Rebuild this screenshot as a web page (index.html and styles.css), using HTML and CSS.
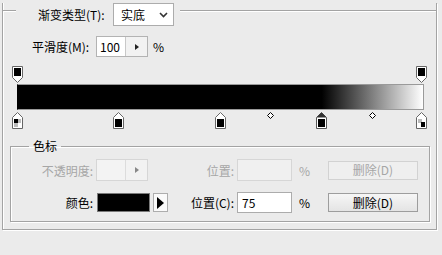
FILE: index.html
```
<!DOCTYPE html>
<html lang="zh-CN">
<head>
    <meta charset="UTF-8">
    <title>渐变编辑器</title>
    <link rel="stylesheet" href="styles.css">
</head>
<body>
    <div class="frame">
        <div class="frameHead">
            <span class="rule ruleShort"></span>
            <label class="headLabel">渐变类型(T):</label>
            <div class="select">
                <span>实底</span>
                <svg class="chevron" width="9" height="6" viewBox="0 0 9 6"><polyline points="1,1 4.5,4.5 8,1" fill="none" stroke="#333" stroke-width="1.6"/></svg>
            </div>
            <span class="rule ruleFill"></span>
        </div>

        <div class="smoothRow">
            <label class="smoothLabel">平滑度(M):</label>
            <div class="spin">
                <span class="spinVal">100</span>
                <span class="spinBtn"><svg width="4" height="6" viewBox="0 0 4 6"><polygon points="0,0 4,3 0,6" fill="#222"/></svg></span>
            </div>
            <span class="unit">%</span>
        </div>

        <!-- gradient ramp: stops sit at their percent position -->
        <div class="ramp">
            <svg class="stop stopTop" style="left:9px" width="11" height="17" viewBox="0 0 11 17"><path d="M0.5,0.5H10.5V11.5L5.5,16.5L0.5,11.5Z" fill="#fff" stroke="#666"/><rect x="2" y="2" width="7" height="8" fill="#000"/></svg>
            <svg class="stop stopTop" style="left:413px" width="11" height="17" viewBox="0 0 11 17"><path d="M0.5,0.5H10.5V11.5L5.5,16.5L0.5,11.5Z" fill="#fff" stroke="#666"/><rect x="2" y="2" width="7" height="8" fill="#000"/></svg>

            <div class="bar"></div>

            <svg class="stop stopBottom" style="left:9px" width="11" height="17" viewBox="0 0 11 17"><path d="M5.5,0.5L10.5,5.5V16.5H0.5V5.5Z" fill="#fff" stroke="#666"/><rect x="2" y="7" width="7" height="8" fill="#bbb"/><rect x="2" y="7" width="4" height="4" fill="#000"/><rect x="6" y="11" width="3" height="4" fill="#fff"/></svg>
            <svg class="stop stopBottom" style="left:110px" width="11" height="17" viewBox="0 0 11 17"><path d="M5.5,0.5L10.5,5.5V16.5H0.5V5.5Z" fill="#fff" stroke="#666"/><rect x="2" y="7" width="7" height="8" fill="#000"/></svg>
            <svg class="stop stopBottom" style="left:212px" width="11" height="17" viewBox="0 0 11 17"><path d="M5.5,0.5L10.5,5.5V16.5H0.5V5.5Z" fill="#fff" stroke="#666"/><rect x="2" y="7" width="7" height="8" fill="#000"/></svg>
            <svg class="stop stopBottom" style="left:313px" width="11" height="17" viewBox="0 0 11 17"><path d="M5.5,0.5L10.5,5.5V16.5H0.5V5.5Z" fill="#fff" stroke="#555"/><path d="M5.5,0.5L10.5,5.5H0.5Z" fill="#333"/><rect x="2" y="7" width="7" height="8" fill="#000"/></svg>
            <svg class="stop stopBottom" style="left:413px" width="11" height="17" viewBox="0 0 11 17"><path d="M5.5,0.5L10.5,5.5V16.5H0.5V5.5Z" fill="#fff" stroke="#666"/><rect x="2" y="7" width="4" height="4" fill="#bbb"/><rect x="5" y="10" width="4" height="5" fill="#000"/></svg>

            <svg class="mid" style="left:264px" width="7" height="7" viewBox="0 0 7 7"><polygon points="3.5,0.5 6.5,3.5 3.5,6.5 0.5,3.5" fill="#fff" stroke="#000"/></svg>
            <svg class="mid" style="left:366px" width="7" height="7" viewBox="0 0 7 7"><polygon points="3.5,0.5 6.5,3.5 3.5,6.5 0.5,3.5" fill="#fff" stroke="#000"/></svg>
        </div>

        <fieldset class="stopGroup">
            <legend>色标</legend>
            <div class="stopGrid">
                <span class="fieldLabel disabled">不透明度:</span>
                <div class="spin spinOff">
                    <span class="spinVal"></span>
                    <span class="spinBtn"><svg width="4" height="6" viewBox="0 0 4 6"><polygon points="0,0 4,3 0,6" fill="#888"/></svg></span>
                </div>
                <span class="fieldLabel disabled">位置:</span>
                <div class="textBox textOff"></div>
                <span class="unit disabled">%</span>
                <button class="btn" disabled>删除(D)</button>

                <span class="fieldLabel">颜色:</span>
                <div class="colorPick">
                    <span class="swatch"></span>
                    <span class="swatchBtn"><svg width="7" height="12" viewBox="0 0 7 12"><polygon points="0,0 7,6 0,12" fill="#000"/></svg></span>
                </div>
                <span class="fieldLabel">位置(C):</span>
                <div class="textBox">75</div>
                <span class="unit">%</span>
                <button class="btn">删除(D)</button>
            </div>
        </fieldset>
    </div>
</body>
</html>
```

FILE: styles.css
```
body {
    margin: 0;
    background-color: #ebebeb;
    font-family: "Noto Sans CJK SC", "Liberation Sans", sans-serif;
    font-size: 12px;
    color: #000;
    height: 255px;
    overflow: hidden;
}

.frame {
    margin: 11px 5px 0 2px;
    border: 1px solid #a3a3a3;
    border-top: none;
    box-shadow: inset 1px 0 0 #fff, 1px 1px 0 #fff;
}

.frameHead {
    display: flex;
    align-items: center;
    height: 23px;
    margin-top: -8px;
}

.rule {
    align-self: flex-start;
    height: 7px;
    border-bottom: 1px solid #a3a3a3;
    box-shadow: 0 1px 0 #fff;
}

.ruleShort {
    width: 13px;
}

.ruleFill {
    flex: 1;
    margin-left: 6px;
}

.headLabel {
    width: 75px;
    margin-left: 22px;
    line-height: 16px;
}

.select {
    width: 61px;
    height: 23px;
    box-sizing: border-box;
    border: 1px solid #acacac;
    background-color: #fff;
    display: flex;
    align-items: center;
    justify-content: space-between;
    padding: 0 5px 0 7px;
    line-height: 16px;
}

.smoothRow {
    display: flex;
    align-items: center;
    height: 21px;
    margin-top: 10px;
    padding-left: 29px;
}

.smoothLabel {
    width: 64px;
}

.spin {
    display: flex;
    width: 52px;
    height: 21px;
    box-sizing: border-box;
    border: 1px solid #b3b3b3;
    background-color: #fff;
}

.spinVal {
    width: 28px;
    line-height: 19px;
    padding-left: 3px;
    box-sizing: border-box;
}

.spinBtn {
    flex: 1;
    border-left: 1px solid #c8c8c8;
    background-color: #f2f2f2;
    display: flex;
    align-items: center;
    justify-content: center;
}

.unit {
    margin-left: 5px;
}

.ramp {
    position: relative;
    height: 66px;
    margin-top: 7px;
}

.bar {
    position: relative;
    top: 20px;
    margin-left: 14px;
    width: 407px;
    height: 26px;
    box-sizing: border-box;
    border: 1px solid #9a9a9a;
    border-left-color: #000;
    background: linear-gradient(to right, #000 0%, #000 75%, #fff 100%);
}

.stop {
    position: absolute;
    display: block;
}

.stopTop {
    top: 2px;
}

.stopBottom {
    top: 48px;
}

.mid {
    position: absolute;
    top: 48px;
    display: block;
}

.stopGroup {
    margin: 8px 6px 7px 7px;
    padding: 0;
    border: 1px solid #a3a3a3;
    box-shadow: inset 1px 1px 0 #fff, 1px 1px 0 #fff;
}

.stopGroup legend {
    margin-left: 18px;
    padding: 0 4px;
    line-height: 16px;
}

.stopGrid {
    display: grid;
    grid-template-columns: 84px 85px 56px 58px 34px 90px;
    grid-template-rows: 22px 21px;
    row-gap: 11px;
    align-items: center;
    padding: 5px 0 8px 0;
}

.fieldLabel {
    text-align: right;
    padding-right: 2px;
}

.disabled {
    color: #a6a6a6;
}

.stopGrid .spin {
    margin-left: 1px;
    height: 22px;
}

.spinOff {
    border-color: #d6d6d6;
    background-color: #f3f3f3;
}

.spinOff .spinBtn {
    border-left-color: #dcdcdc;
}

.textBox {
    width: 55px;
    height: 21px;
    box-sizing: border-box;
    margin-left: 1px;
    border: 1px solid #acacac;
    background-color: #fff;
    padding-left: 4px;
    line-height: 19px;
}

.textOff {
    border-color: #d6d6d6;
    background-color: #f0f0f0;
    height: 22px;
}

.colorPick {
    display: flex;
    align-items: center;
    margin-left: 2px;
}

.swatch {
    width: 53px;
    height: 19px;
    box-sizing: border-box;
    border: 1px solid #7a7a7a;
    background-color: #000;
}

.swatchBtn {
    width: 15px;
    height: 19px;
    box-sizing: border-box;
    margin-left: 3px;
    border: 1px solid #adadad;
    background-color: #fafafa;
    display: flex;
    align-items: center;
    justify-content: center;
}

.btn {
    width: 90px;
    height: 19px;
    padding: 0;
    font-family: inherit;
    font-size: 12px;
    line-height: 16px;
    color: #000;
    border: 1px solid #9d9d9d;
    border-radius: 0;
    background: linear-gradient(#f6f6f6, #e4e4e4);
}

.btn:disabled {
    color: #a6a6a6;
    border-color: #d2d2d2;
    background: #efefef;
}
```
